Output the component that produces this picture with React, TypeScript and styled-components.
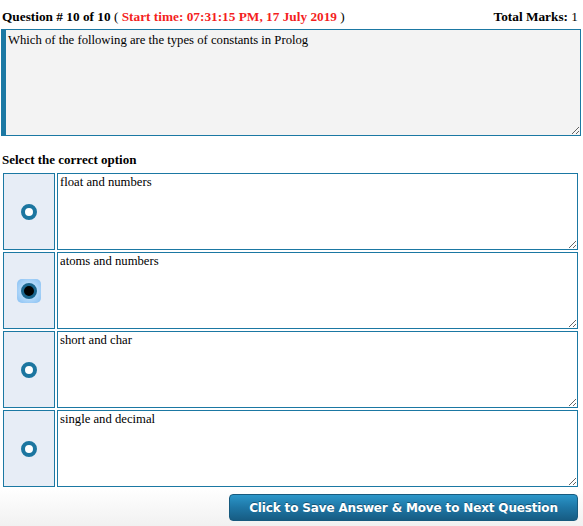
import * as React from "react";
import styled, { createGlobalStyle } from "styled-components";

const GlobalStyle = createGlobalStyle`
    html, body {
        margin: 0;
        padding: 0;
        background: #ffffff;
    }
    body {
        font-family: "Liberation Serif", "Times New Roman", serif;
        font-size: 13px;
        color: #000;
    }
`

const Page = styled.div`
    width: 583px;
    min-height: 526px;
    display: flex;
    flex-direction: column;
    background: linear-gradient(#ffffff 0px, #ffffff 488px, #f1f1f1 526px);
`

const Header = styled.div`
    display: flex;
    justify-content: space-between;
    align-items: baseline;
    padding: 9px 5px 0 2px;
    font-size: 13.3px;
    line-height: 15px;
`

const Bold = styled.b`
    font-weight: bold;
`

const Red = styled.b`
    color: #f41f1f;
`

const QuestionBox = styled.textarea`
    display: block;
    box-sizing: border-box;
    margin: 5px 0 0 1px;
    width: 580px;
    height: 107px;
    padding: 3px 2px;
    border: 1px solid #1b78a3;
    border-left: 5px solid #1b78a3;
    background: #f3f3f3;
    font-family: "Liberation Serif", "Times New Roman", serif;
    font-size: 12.7px;
    color: #000;
    resize: vertical;
    outline: none;
`

const SectionTitle = styled.h4`
    margin: 16px 0 0 2px;
    font-size: 13px;
    line-height: 15px;
`

const Options = styled.div`
    display: flex;
    flex-direction: column;
    gap: 2px;
    padding: 6px 0 0 3px;
`

const OptionRow = styled.div`
    display: grid;
    grid-template-columns: 52px 521px;
    column-gap: 2px;
    height: 77px;
`

const RadioCell = styled.label`
    box-sizing: border-box;
    border: 1px solid #1b78a3;
    background: #e7edf6;
    display: flex;
    align-items: center;
    justify-content: center;
    cursor: pointer;
`

const Glow = styled.span<{ $on: boolean }>`
    display: flex;
    align-items: center;
    justify-content: center;
    width: 24px;
    height: 24px;
    border-radius: 5px;
    background: ${p => p.$on ? "radial-gradient(circle, #b9dcfb 40%, #86bff2 100%)" : "transparent"};
`

const RadioDot = styled.span<{ $on: boolean }>`
    box-sizing: border-box;
    width: 16px;
    height: 16px;
    border-radius: 50%;
    border: ${p => p.$on ? "3px solid #1a668f" : "4px solid #1c76a0"};
    background: ${p => p.$on ? "#000" : "#fff"};
`

const HiddenRadio = styled.input`
    display: none;
`

const AnswerBox = styled.textarea`
    box-sizing: border-box;
    width: 521px;
    height: 77px;
    padding: 1px 2px;
    margin: 0;
    border: 1px solid #1b78a3;
    background: #fff;
    font-family: "Liberation Serif", "Times New Roman", serif;
    font-size: 12.7px;
    color: #000;
    resize: vertical;
    outline: none;
`

const Footer = styled.div`
    display: flex;
    justify-content: flex-end;
    padding: 7px 5px 0 0;
`

const NextButton = styled.button`
    box-sizing: border-box;
    width: 349px;
    height: 27px;
    border: 1px solid #175a7e;
    border-radius: 4px;
    background: linear-gradient(#2b96c9, #1e76a5 50%, #175c83);
    color: #fff;
    font-family: "DejaVu Sans", Verdana, sans-serif;
    font-weight: bold;
    font-size: 12px;
    letter-spacing: -0.15px;
    text-shadow: 0 -1px 0 rgba(0, 0, 0, 0.35);
    cursor: pointer;
`

const options = [
    "float and numbers",
    "atoms and numbers",
    "short and char",
    "single and decimal",
]

export default function App() {
    const [picked, setPicked] = React.useState<number>(1)
    return (
        <Page>
            <GlobalStyle />
            <Header>
                <span>
                    <Bold>Question # 10 of 10</Bold> ( <Red>Start time: 07:31:15 PM, 17 July 2019</Red> )
                </span>
                <span><Bold>Total Marks:</Bold> 1</span>
            </Header>
            <QuestionBox readOnly defaultValue="Which of the following are the types of constants in Prolog" />
            <SectionTitle>Select the correct option</SectionTitle>
            <Options>
                {options.map((text, index) => (
                    <OptionRow key={index}>
                        <RadioCell>
                            <HiddenRadio type="radio" name="answer" checked={picked === index}
                                onChange={() => setPicked(index)} />
                            <Glow $on={picked === index}>
                                <RadioDot $on={picked === index} />
                            </Glow>
                        </RadioCell>
                        <AnswerBox readOnly defaultValue={text} />
                    </OptionRow>
                ))}
            </Options>
            <Footer>
                <NextButton>Click to Save Answer &amp; Move to Next Question</NextButton>
            </Footer>
        </Page>
    )
}
